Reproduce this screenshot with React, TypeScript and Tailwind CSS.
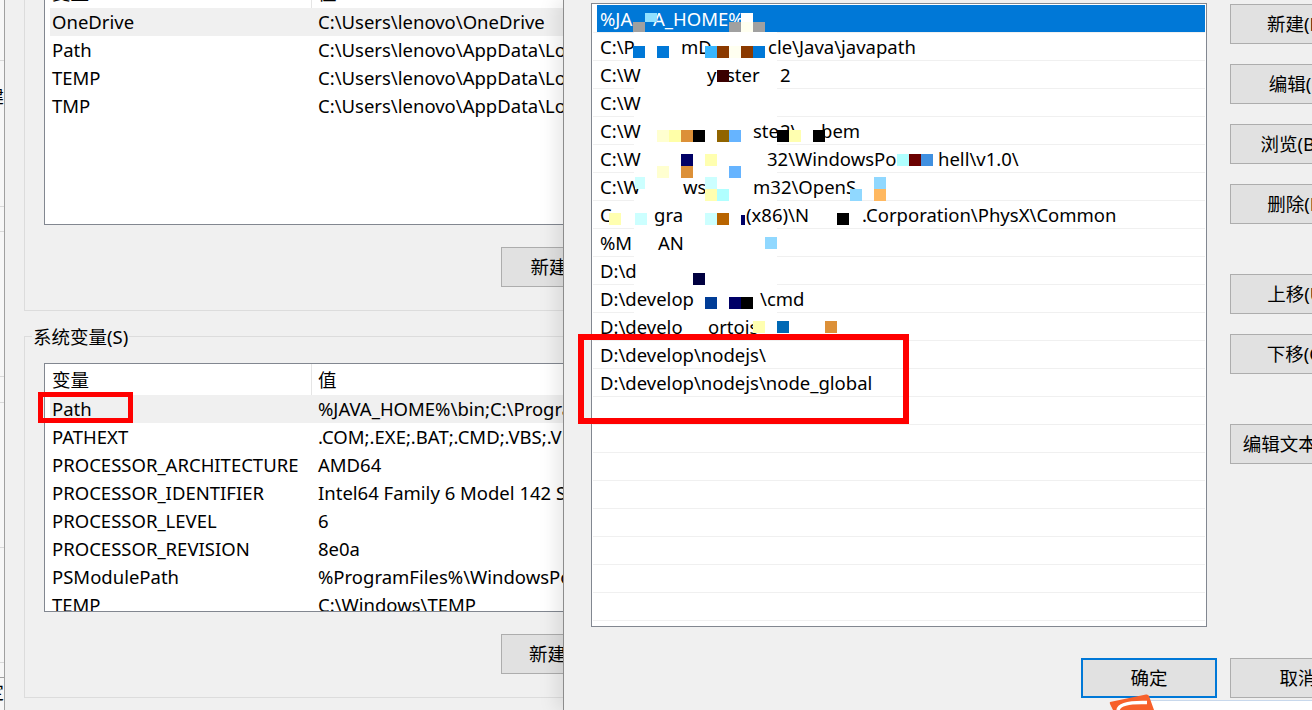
import React from 'react';

const FONT = 'font-["Noto_Sans","Noto_Sans_CJK_SC",sans-serif] text-[18.5px] leading-[28px] text-black';

const userVars = [
  ['OneDrive', 'C:\\Users\\lenovo\\OneDrive'],
  ['Path', 'C:\\Users\\lenovo\\AppData\\Local\\Microsoft'],
  ['TEMP', 'C:\\Users\\lenovo\\AppData\\Local\\Temp'],
  ['TMP', 'C:\\Users\\lenovo\\AppData\\Local\\Temp'],
];

const systemVars = [
  ['Path', '%JAVA_HOME%\\bin;C:\\ProgramData'],
  ['PATHEXT', '.COM;.EXE;.BAT;.CMD;.VBS;.VBE;.JS'],
  ['PROCESSOR_ARCHITECTURE', 'AMD64'],
  ['PROCESSOR_IDENTIFIER', 'Intel64 Family 6 Model 142 Stepping'],
  ['PROCESSOR_LEVEL', '6'],
  ['PROCESSOR_REVISION', '8e0a'],
  ['PSModulePath', '%ProgramFiles%\\WindowsPowerShell'],
  ['TEMP', 'C:\\Windows\\TEMP'],
];

// visible pieces of each path row: [page x, text]
const pathRows: [number, string][][] = [
  [[600, '%JA'], [653, 'A_HOME%']],
  [[600, 'C:\\P'], [681, 'mD'], [768, 'cle\\Java\\javapath']],
  [[600, 'C:\\W'], [707, 'y'], [726, 'ster'], [780, '2']],
  [[600, 'C:\\W']],
  [[600, 'C:\\W'], [753, 'ste'], [780, '2\\'], [821, 'bem']],
  [[600, 'C:\\W'], [767, '32\\WindowsPo'], [938, 'hell\\v1.0\\']],
  [[600, 'C:\\W'], [683, 'ws\\'], [753, 'm32\\OpenS']],
  [[600, 'C'], [654, 'gra'], [746, '(x86)\\N'], [862, '.Corporation\\PhysX\\Common']],
  [[600, '%M'], [658, 'AN']],
  [[600, 'D:\\d']],
  [[600, 'D:\\develop'], [760, '\\cmd']],
  [[600, 'D:\\develo'], [708, 'ortois']],
  [[600, 'D:\\develop\\nodejs\\']],
  [[600, 'D:\\develop\\nodejs\\node_global']],
  [], [], [], [], [], [], [], [],
];

// scribbled-out mosaic blocks over the list: [page x, page y, w, h, colour]
const blocks: [number, number, number, number, string][] = [
  [645, 13, 12, 9, '#90e0ff'],
  [633, 22, 12, 10, '#a0a0a0'],
  [741, 13, 12, 9, '#ffffff'],
  [729, 22, 12, 10, '#a0a0a0'],
  [741, 22, 12, 10, '#fffff0'],
  [753, 22, 12, 10, '#a0a0a0'],
  [633, 46, 12, 12, '#0078d7'],
  [657, 46, 12, 12, '#0078d7'],
  [705, 46, 12, 12, '#38b6ff'],
  [717, 46, 12, 12, '#8b3a00'],
  [729, 46, 12, 12, '#fffff0'],
  [741, 46, 12, 12, '#8b3a00'],
  [753, 46, 12, 12, '#0078d7'],
  [717, 70, 12, 12, '#3a0000'],
  [657, 130, 12, 12, '#ffffd0'],
  [669, 130, 12, 12, '#ffffa8'],
  [681, 130, 12, 12, '#dc9038'],
  [693, 130, 12, 12, '#000000'],
  [717, 130, 12, 12, '#906400'],
  [729, 130, 12, 12, '#66b4ff'],
  [777, 130, 12, 12, '#000000'],
  [789, 130, 12, 12, '#ffffb0'],
  [813, 130, 12, 12, '#000000'],
  [681, 154, 12, 12, '#000066'],
  [705, 154, 12, 12, '#ffffb0'],
  [897, 154, 12, 12, '#b0ffff'],
  [909, 154, 12, 12, '#6a0000'],
  [921, 154, 12, 12, '#4090e0'],
  [657, 166, 12, 12, '#ffffd0'],
  [681, 166, 12, 12, '#dc9038'],
  [729, 166, 12, 12, '#66b4ff'],
  [635, 177, 10, 12, '#ccffff'],
  [705, 177, 12, 12, '#ccffff'],
  [874, 177, 12, 12, '#90d8ff'],
  [705, 189, 12, 12, '#ffffb0'],
  [717, 189, 12, 12, '#b0ffff'],
  [850, 189, 12, 12, '#90d8ff'],
  [874, 189, 12, 12, '#ffb860'],
  [609, 213, 12, 12, '#ffffb0'],
  [635, 213, 12, 12, '#ccffff'],
  [705, 213, 12, 12, '#ccffff'],
  [717, 213, 12, 12, '#b86400'],
  [741, 215, 4, 10, '#000066'],
  [837, 213, 12, 12, '#000000'],
  [765, 237, 12, 12, '#90d8ff'],
  [693, 273, 12, 12, '#000040'],
  [705, 297, 12, 12, '#003c96'],
  [729, 297, 12, 12, '#000066'],
  [741, 297, 12, 12, '#000000'],
  [753, 321, 12, 12, '#ffffb0'],
  [777, 321, 12, 12, '#0068b4'],
  [825, 321, 12, 12, '#dc9038'],
];

const erasedLines = [32, 60, 88, 116, 144, 172, 200, 228, 256, 284, 312];

function WinButton({ label, focused }: { label: string; focused?: boolean }) {
  return (
    <div
      className={
        'flex h-[40px] w-[136px] shrink-0 items-center justify-center bg-[#e1e1e1] whitespace-nowrap ' +
        (focused ? 'border-2 border-[#0078d7]' : 'border border-[#adadad]')
      }
    >
      {label}
    </div>
  );
}

function VarRow({ name, value, active }: { name: string; value: string; active?: boolean }) {
  return (
    <div className={'ml-[5px] flex h-[28px] pl-[2px] whitespace-nowrap ' + (active ? 'bg-[#f0f0f0]' : '')}>
      <span className="w-[266px] shrink-0">{name}</span>
      <span>{value}</span>
    </div>
  );
}

function VarHeader() {
  return (
    <div className="flex h-[31px] whitespace-nowrap">
      <span className="w-[266px] shrink-0 pl-[7px] pt-[2px]">变量</span>
      <span className="border-l border-[#e5e5e5] pl-[6px] pt-[2px]">值</span>
    </div>
  );
}

function LeftStrip() {
  return (
    <div className="flex w-[5px] shrink-0 flex-col overflow-hidden border-r border-[#a0a0a0] bg-[#f7f7f7]">
      <div className="h-[61px] shrink-0 border-b border-[#d9d9d9]" />
      <div className="flex h-[146px] shrink-0 justify-end border-b border-[#d9d9d9] pt-[21px] whitespace-nowrap">建</div>
      <div className="h-[25px] shrink-0 border-b border-[#d9d9d9]" />
      <div className="h-[145px] shrink-0 border-b border-[#d9d9d9]" />
      <div className="h-[26px] shrink-0 border-b border-[#d9d9d9]" />
      <div className="h-[145px] shrink-0 border-b border-[#d9d9d9]" />
      <div className="h-[115px] shrink-0 border-b border-[#d9d9d9]" />
      <div className="h-[15px] shrink-0 border-b border-[#a0a0a0]" />
      <div className="flex justify-end whitespace-nowrap">定</div>
    </div>
  );
}

function BackWindow() {
  return (
    <div className="flex w-[563px] shrink-0 overflow-hidden">
      <LeftStrip />
      <div className="pl-[19px]">
        <div className="h-[311px] w-[700px] border-b border-l border-[#dcdcdc] pl-[19px]">
          <div className="h-[225px] w-[640px] overflow-hidden border-x border-b border-[#828790] bg-white">
            <div className="-mt-[23px]">
              <VarHeader />
            </div>
            {userVars.map(([n, v], i) => (
              <VarRow key={n} name={n} value={v} active={i === 0} />
            ))}
          </div>
          <div className="mt-[22px] ml-[457px]">
            <WinButton label="新建(N)..." />
          </div>
        </div>
        <div className="relative mt-[25px] h-[362px] w-[700px] border border-[#dcdcdc] pt-[26px] pl-[19px]">
          <span className="absolute -top-[14px] left-[7px] bg-[#f0f0f0] px-px whitespace-nowrap">系统变量(S)</span>
          <div className="h-[249px] w-[640px] overflow-hidden border border-[#828790] bg-white">
            <VarHeader />
            {systemVars.map(([n, v], i) => (
              <VarRow key={n} name={n} value={v} active={i === 0} />
            ))}
          </div>
          <div className="mt-[22px] ml-[457px]">
            <WinButton label="新建(W)..." />
          </div>
        </div>
      </div>
    </div>
  );
}

function PathList() {
  return (
    <div className="relative h-[624px] w-[616px] shrink-0 overflow-hidden border border-[#828790] bg-white pt-px">
      {pathRows.map((parts, i) => (
        <div key={i} className="mx-px flex h-[28px] border-b border-[#f0f0f0] pl-[4px]">
          <div className={'flex h-[27px] flex-1 pl-[3px] whitespace-nowrap ' + (i === 0 ? 'bg-[#0078d7] text-white' : '')}>
            {parts.map(([x, text], j) => (
              <span
                key={j}
                className={j === parts.length - 1 ? 'flex-1' : 'shrink-0'}
                style={j === parts.length - 1 ? undefined : { width: parts[j + 1][0] - x }}
              >
                {text}
              </span>
            ))}
          </div>
        </div>
      ))}
      {erasedLines.map((y) => (
        <div key={y} className="absolute h-px w-[143px] bg-white" style={{ left: 634 - 592, top: y - 4 }} />
      ))}
      {blocks.map(([x, y, w, h, color], i) => (
        <div key={i} className="absolute" style={{ left: x - 592, top: y - 4, width: w, height: h, background: color }} />
      ))}
    </div>
  );
}

function EditDialog() {
  return (
    <div className="relative z-10 min-w-0 flex-1 overflow-hidden border-l border-[#8c8c8c] bg-[#f0f0f0] pt-[3px] pl-[27px] shadow-[-6px_0_18px_rgba(0,0,0,0.1)]">
      <div className="flex gap-[23px]">
        <PathList />
        <div className="flex w-[136px] shrink-0 flex-col pt-px">
          <WinButton label="新建(N)" />
          <div className="mt-[20px]"><WinButton label="编辑(E)" /></div>
          <div className="mt-[20px]"><WinButton label="浏览(B)..." /></div>
          <div className="mt-[20px]"><WinButton label="删除(D)" /></div>
          <div className="mt-[50px]"><WinButton label="上移(U)" /></div>
          <div className="mt-[20px]"><WinButton label="下移(O)" /></div>
          <div className="mt-[50px]"><WinButton label="编辑文本(T)..." /></div>
        </div>
      </div>
      <div className="mt-[31px] ml-[490px] flex gap-[13px]">
        <WinButton label="确定" focused />
        <WinButton label="取消" />
      </div>
    </div>
  );
}

function CornerOverlay() {
  return (
    <>
      <div className="absolute top-[700px] left-[1150px] z-20 flex h-[10px] w-[162px] items-end gap-[70px] border-t border-[#c8d8ec] bg-white pl-[26px]">
        <span className="h-[2px] w-[3px] bg-[#3a7fd0]" />
        <span className="h-[2px] w-[3px] bg-[#3a7fd0]" />
        <span className="h-[3px] w-[4px] bg-[#3a7fd0]" />
      </div>
      <svg className="absolute top-[692px] left-[1108px] z-30" width="48" height="18" viewBox="0 0 48 18">
        <path d="M2 10 L38 2.5 Q40 2 41 4 L46 18 L5 18 L2 12 Q1.5 10.5 2 10 Z" fill="#f7602a" />
        <path d="M10 18 C11 12 22 10 39 10.5" fill="none" stroke="#ffffff" strokeWidth="3.5" />
      </svg>
    </>
  );
}

export default function App() {
  return (
    <div className={'relative flex h-[710px] w-[1312px] overflow-hidden bg-[#f0f0f0] ' + FONT}>
      <BackWindow />
      <EditDialog />
      {/* annotation rectangles drawn over the screenshot */}
      <div className="absolute top-[392px] left-[38px] z-20 h-[31px] w-[95px] border-[5px] border-[#ff0000]" />
      <div className="absolute top-[334px] left-[578px] z-20 h-[90px] w-[331px] border-[6px] border-[#ff0000]" />
      <CornerOverlay />
    </div>
  );
}
